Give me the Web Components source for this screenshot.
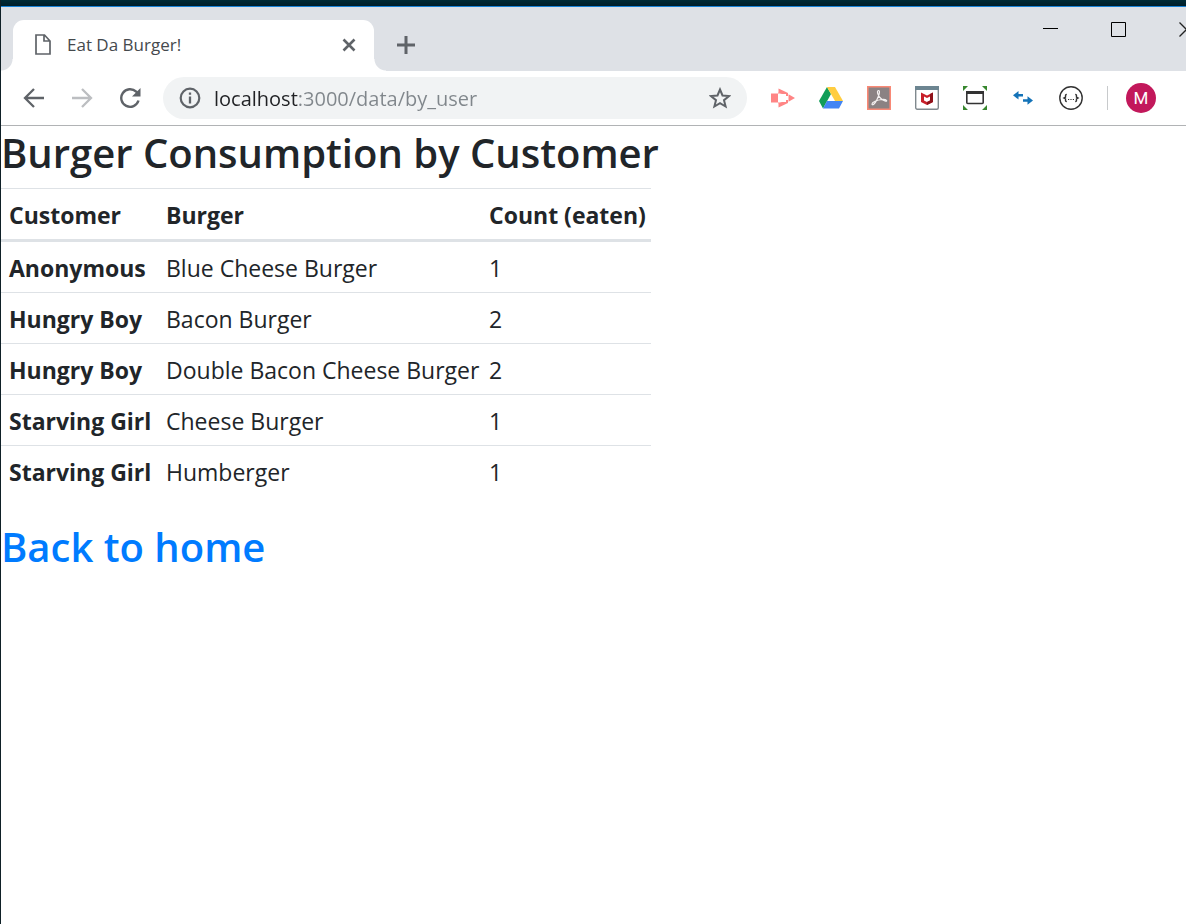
<!DOCTYPE html>
<html lang="en">
<head>
<meta charset="utf-8">
<title>Eat Da Burger!</title>
<style>
  html, body { margin: 0; min-height: 100vh; background: #fff; }
  body { font-family: "Open Sans", "Noto Sans", sans-serif; color: #212529; overflow-x: hidden; }
</style>
</head>
<body>
<browser-window>
  <tab-strip slot="chrome"><browser-tab>Eat Da Burger!</browser-tab></tab-strip>
  <browser-toolbar slot="chrome"></browser-toolbar>
  <burger-report></burger-report>
</browser-window>

<template id="window-tpl">
  <style>
    :host { display: block; min-height: 100vh; box-sizing: border-box; background: linear-gradient(#002b36, #001f29) 0 0 / 100% 6px no-repeat, #fff; padding-top: 6px; border-left: 1px solid #0f2027; }
    .frame { border-top: 1px solid #1883d7; }
  </style>
  <div class="frame"><slot name="chrome"></slot><slot></slot></div>
</template>

<template id="strip-tpl">
  <style>
    :host { display: flex; height: 64px; background: #dee1e6; overflow: hidden; }
    .tabs { display: flex; align-items: flex-end; padding-left: 12px; flex: 1; }
    button { border: 0; background: none; padding: 0; display: block; }
    svg { display: block; }
    .add { width: 64px; height: 51px; padding-bottom: 2px; display: grid; place-items: center; }
    .controls { display: flex; flex: none; margin-right: -34px; }
    .controls button { width: 68px; height: 45px; display: grid; place-items: center; }
  </style>
  <div class="tabs">
    <slot></slot>
    <button class="add" aria-label="New tab"><svg width="18" height="18"><path d="M9 0v18M0 9h18" stroke="#5f6368" stroke-width="3"/></svg></button>
  </div>
  <div class="controls">
    <button aria-label="Minimize"><svg width="15" height="15"><path d="M0 6.500h15" stroke="#000"/></svg></button>
    <button aria-label="Maximize"><svg width="15" height="15"><path d="M.5.5h14v14H.5z" stroke="#000" fill="none"/></svg></button>
    <button aria-label="Close"><svg width="15" height="15"><path d="M.5.5l14 14M14.500.5l-14 14" stroke="#222" stroke-width="1.300"/></svg></button>
  </div>
</template>

<template id="tab-tpl">
  <style>
    :host { display: flex; box-sizing: border-box; width: 361px; height: 51px; padding: 0 16px 2px 22px; background: #fff; border-radius: 11px 11px 0 0; align-items: center; position: relative; font-size: 17px; color: #45494d; }
    :host::before, :host::after { content: ""; position: absolute; bottom: 0; width: 12px; height: 12px; }
    :host::before { right: 100%; background: radial-gradient(circle at 0 0, transparent 11px, #fff 12px); }
    :host::after { left: 100%; background: radial-gradient(circle at 100% 0, transparent 11px, #fff 12px); }
    .title { flex: 1; margin-left: 16px; }
    button { border: 0; background: none; padding: 2px; }
    svg { display: block; }
  </style>
  <svg width="16" height="21" fill="none" stroke="#5f6368" stroke-width="1.700"><path d="M1 1h8.500l5.500 6v13H1zM9 1v6h6"/></svg>
  <span class="title"><slot></slot></span>
  <button aria-label="Close tab"><svg width="14" height="14"><path d="M1.500 1.500l11 11m0-11l-11 11" stroke="#5f6368" stroke-width="2.600"/></svg></button>
</template>

<template id="toolbar-tpl">
  <style>
    :host { display: flex; align-items: center; box-sizing: border-box; height: 55px; background: #fff; border-bottom: 1px solid #b1b3b5; padding-right: 30px; }
    button { border: 0; background: none; padding: 0; width: 48px; height: 48px; display: grid; place-items: center; flex: none; }
    svg { display: block; }
    .nav { display: flex; padding: 0 9px; }
    .address { display: flex; align-items: center; flex: 1; height: 42px; border-radius: 21px; background: #f1f3f4; }
    .address .info { width: 51px; padding-left: 3px; }
    .address .star { width: 54px; }
    input { flex: 1; min-width: 0; border: 0; padding: 0; outline: 0; height: 42px; font: 20px "Open Sans", "Noto Sans", sans-serif; color: #80868b; -webkit-text-fill-color: transparent; background: linear-gradient(90deg, #202124 84px, #80868b 84px); -webkit-background-clip: text; background-clip: text; }
    .ext { display: flex; padding-left: 12px; }
    .rule { width: 1px; height: 24px; background: #c8cacc; margin-left: 12px; }
    .avatar { margin-left: 18px; width: 30px; height: 30px; border-radius: 50%; background: #c2185b; color: #fff; font: 17px Roboto, sans-serif; }
  </style>
  <div class="nav">
    <button aria-label="Back"><svg width="22" height="20" fill="none" stroke="#5f6368" stroke-width="2.300"><path d="M21 10H2M11 1l-9 9 9 9"/></svg></button>
    <button aria-label="Forward"><svg width="22" height="20" fill="none" stroke="#bcbec1" stroke-width="2.300"><path d="M1 10h19M11 1l9 9-9 9"/></svg></button>
    <button aria-label="Reload"><svg width="22" height="22" fill="none" stroke="#5f6368" stroke-width="2.400"><path d="M19.500 13.500a8.800 8.800 0 1 1-2.300-8.800L19.500 7"/><path d="M21.500 1v8.500H13z" fill="#5f6368" stroke="none"/></svg></button>
  </div>
  <div class="address">
    <button class="info" aria-label="Site information"><svg width="22" height="22"><circle cx="11" cy="11" r="9.300" fill="none" stroke="#5f6368" stroke-width="2.200"/><path d="M11 5.500v2.300M11 9.500v7" stroke="#5f6368" stroke-width="2.300"/></svg></button>
    <input type="text" aria-label="Address" value="localhost:3000/data/by_user" spellcheck="false">
    <button class="star" aria-label="Bookmark"><svg width="22" height="22" viewBox="0 0 22 22"><path d="M11 2.500l2.500 6 6.500.5-5 4.200 1.600 6.300L11 16.100l-5.600 3.400L7 13.200 2 9l6.500-.5z" fill="none" stroke="#5f6368" stroke-width="2"/></svg></button>
  </div>
  <div class="ext">
    <button aria-label="Screen recorder"><svg width="24" height="20"><g fill="#ff8585"><path d="M0 5.500h7v9H0zM17.500 6.200l6.500 3.800-6.500 3.800z"/><path d="M7.500 4.500V.5L17 5v3h-2V6H11zM7.500 15.500v4L17 15v-3h-2v2H11z"/><path d="M7 4.500h7v1H7zM7 14.500h7v1H7z"/></g></svg></button>
    <button aria-label="Google Drive"><svg width="24" height="22"><path d="M8 0L0 14l4 7.500L12 7z" fill="#119d58"/><path d="M8 0h8l8 14h-8z" fill="#ffcd40"/><path d="M8 14h16l-4 7.500H4z" fill="#4285f4"/></svg></button>
    <button aria-label="Adobe Acrobat"><svg width="24" height="24"><path d="M.8.8h22.400v22.400H.8z" fill="#8b8283" stroke="#f98976" stroke-width="1.600"/><path d="M11.500 4.500c-2.500 0-.5 8 6.500 10.500 3 1 2-2-3-1.500-5 .5-10 2.500-10 4.500 0 2 3 0 5-4.500 2-4 3.500-9 1.500-9z" fill="none" stroke="#f4f0f0" stroke-width="1.200"/></svg></button>
    <button aria-label="McAfee"><svg width="24" height="24"><rect x=".7" y=".7" width="22.600" height="22.600" rx="1.500" fill="#fff" stroke="#80898e" stroke-width="1.400"/><path d="M0 0h24v4H0z" fill="#6c8591"/><path d="M6 6.500l6 3 6-3V16l-6 3-6-3z" fill="#c8202a"/><path d="M9 10.500l3 1.500 3-1.500v4L12 16l-3-1.500z" fill="#fff"/><path d="M15 8l3-1.500V16l-6 3v-3l3-1.500z" fill="#8f111a"/></svg></button>
    <button aria-label="Window resizer"><svg width="24" height="24"><path d="M0 0h5L0 5zM24 0v5l-5-5zM0 24v-5l5 5zM24 24h-5l5-5z" fill="#37872e"/><rect x="3.800" y="6" width="16.400" height="11.500" rx="1" fill="#fff" stroke="#333" stroke-width="1.600"/><path d="M3 5h18v3H3z" fill="#333"/></svg></button>
    <button aria-label="Switch"><svg width="20" height="14" fill="#1473b8"><path d="M0 4.200L5.500 0v3H10v2.600H5.500v3zM20 9.500l-5.500-4.300v3H10v2.600h4.500v3z"/></svg></button>
    <button aria-label="JSON viewer"><svg width="24" height="24" fill="none" stroke="#333"><circle cx="12" cy="12" r="11.200" stroke-width="1.400"/><path d="M7.800 8.500c-2 0-1 2-1.300 2.700L5 12l1.500.8c.3.700-.7 2.700 1.300 2.700M16.200 8.500c2 0 1 2 1.300 2.700L19 12l-1.500.8c-.3.700.7 2.700-1.300 2.700" stroke-width="1.400"/><path d="M9 13.500h1.200m1.200 0h1.200m1.200 0H15" stroke-width="1.100"/></svg></button>
  </div>
  <span class="rule"></span>
  <button class="avatar" aria-label="Profile M">M</button>
</template>

<template id="report-tpl">
  <style>
    :host { display: block; }
    h1, h2 { margin: 0; font-size: 40px; line-height: 54px; font-weight: 600; white-space: nowrap; }
    h1 { height: 62px; }
    table { border-collapse: separate; border-spacing: 0; table-layout: fixed; width: 650px; font-size: 23px; line-height: 34px; }
    th, td { padding: 9px 8px 7px; text-align: left; border-top: 1px solid #dee2e6; white-space: nowrap; font-weight: 400; }
    th { font-weight: 700; }
    thead th { border-bottom: 2px solid #dee2e6; }
    .who { width: 141px; }
    .what { width: 307px; }
    h2 { margin-top: 24px; }
    a { color: #007bff; text-decoration: none; }
  </style>
  <h1>Burger Consumption by Customer</h1>
  <table>
    <thead><tr><th class="who" scope="col">Customer</th><th class="what" scope="col">Burger</th><th scope="col">Count (eaten)</th></tr></thead>
    <tbody>
      <tr><th scope="row">Anonymous</th><td>Blue Cheese Burger</td><td>1</td></tr>
      <tr><th scope="row">Hungry Boy</th><td>Bacon Burger</td><td>2</td></tr>
      <tr><th scope="row">Hungry Boy</th><td>Double Bacon Cheese Burger</td><td>2</td></tr>
      <tr><th scope="row">Starving Girl</th><td>Cheese Burger</td><td>1</td></tr>
      <tr><th scope="row">Starving Girl</th><td>Humberger</td><td>1</td></tr>
    </tbody>
  </table>
  <h2><a href="/">Back to home</a></h2>
</template>

<script>
  class TemplateElement extends HTMLElement {
    constructor() {
      super();
      const tpl = document.getElementById(this.constructor.template);
      this.attachShadow({ mode: "open" }).append(tpl.content.cloneNode(true));
    }
  }
  customElements.define("browser-window", class extends TemplateElement { static template = "window-tpl"; });
  customElements.define("tab-strip", class extends TemplateElement { static template = "strip-tpl"; });
  customElements.define("browser-tab", class extends TemplateElement { static template = "tab-tpl"; });
  customElements.define("browser-toolbar", class extends TemplateElement { static template = "toolbar-tpl"; });
  customElements.define("burger-report", class extends TemplateElement { static template = "report-tpl"; });
</script>
</body>
</html>
